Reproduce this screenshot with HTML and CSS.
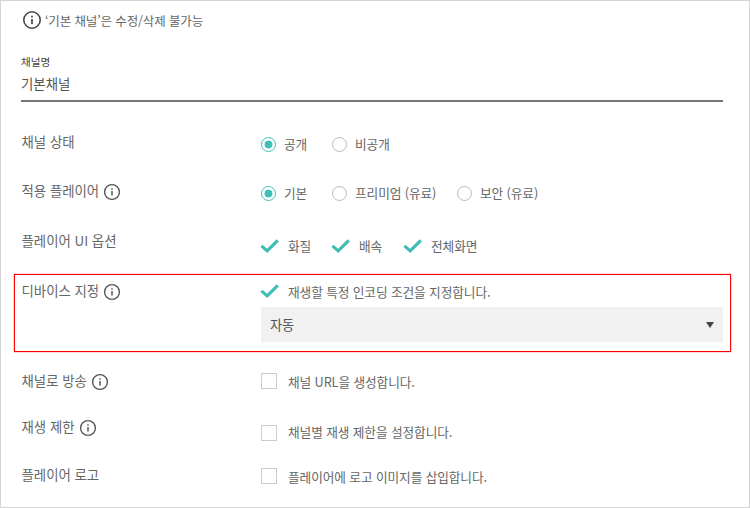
FILE: index.html
```html
<!DOCTYPE html>
<html lang="ko">
<head>
<meta charset="utf-8">
<title>채널 설정</title>
<link rel="stylesheet" href="styles.css">
</head>
<body>
<svg class="defs" width="0" height="0">
  <symbol id="info" viewBox="0 0 18 18"><circle cx="9" cy="9" r="7.4" fill="none" stroke="currentColor" stroke-width="1.4"/><path d="M9 8v4.6M9 5.2v1.5" fill="none" stroke="currentColor" stroke-width="1.5"/></symbol>
  <symbol id="check" viewBox="0 0 20 14"><path d="M1.4 6.8L7.2 11.8L17.8 1.4" fill="none" stroke="currentColor" stroke-width="3.1"/></symbol>
</svg>
<main class="panel">
  <p class="notice"><svg class="info info-lg"><use href="#info"/></svg><span>‘기본 채널’은 수정/삭제 불가능</span></p>
  <div class="field">
    <div class="caption">채널명</div>
    <div class="value">기본채널</div>
  </div>

  <section class="row row-status">
    <div class="label"><span>채널 상태</span></div>
    <div class="options radios">
      <label class="radio"><i class="dot on"></i><span>공개</span></label>
      <label class="radio"><i class="dot"></i><span>비공개</span></label>
    </div>
  </section>

  <section class="row row-player">
    <div class="label"><span>적용 플레이어</span><svg class="info"><use href="#info"/></svg></div>
    <div class="options radios">
      <label class="radio"><i class="dot on"></i><span>기본</span></label>
      <label class="radio"><i class="dot"></i><span>프리미엄 (유료)</span></label>
      <label class="radio"><i class="dot"></i><span>보안 (유료)</span></label>
    </div>
  </section>

  <section class="row row-ui">
    <div class="label"><span>플레이어 UI 옵션</span></div>
    <div class="options checks">
      <label class="item"><svg class="check"><use href="#check"/></svg><span>화질</span></label>
      <label class="item"><svg class="check"><use href="#check"/></svg><span>배속</span></label>
      <label class="item"><svg class="check"><use href="#check"/></svg><span>전체화면</span></label>
    </div>
  </section>

  <section class="row row-device">
    <div class="label"><span>디바이스 지정</span><svg class="info"><use href="#info"/></svg></div>
    <div class="options">
      <label class="item"><svg class="check"><use href="#check"/></svg><span>재생할 특정 인코딩 조건을 지정합니다.</span></label>
      <div class="select"><span>자동</span><i class="arrow"></i></div>
    </div>
  </section>

  <section class="row row-broadcast">
    <div class="label"><span>채널로 방송</span><svg class="info"><use href="#info"/></svg></div>
    <div class="options"><label class="item"><i class="box"></i><span>채널 URL을 생성합니다.</span></label></div>
  </section>

  <section class="row row-limit">
    <div class="label"><span>재생 제한</span><svg class="info"><use href="#info"/></svg></div>
    <div class="options"><label class="item"><i class="box"></i><span>채널별 재생 제한을 설정합니다.</span></label></div>
  </section>

  <section class="row row-logo">
    <div class="label"><span>플레이어 로고</span></div>
    <div class="options"><label class="item"><i class="box"></i><span>플레이어에 로고 이미지를 삽입합니다.</span></label></div>
  </section>
</main>
</body>
</html>
```
FILE: styles.css
```css
* { box-sizing: border-box; }
body { margin: 0; background: #fff; color: #666; font-family: "Noto Sans CJK KR", sans-serif; font-weight: 400; }
.defs { display: block; }
.panel { height: 508px; border: 1px solid #d5d5d5; padding: 7px 18px 0 13px; }
.notice { display: flex; align-items: center; height: 24px; margin: 0 0 0 8px; gap: 3px; font-size: 12.5px; line-height: 20px; letter-spacing: -0.13px; }
.notice span { padding-top: 2px; }
.info { width: 18px; height: 18px; flex: none; color: #555; }
.info-lg { width: 20px; height: 20px; color: #444; }
.field { margin: 20px 8px 29px 7px; height: 50px; border-bottom: 2px solid #777; }
.caption { padding-top: 1px; font-size: 10.6px; line-height: 18px; color: #444; }
.value { font-size: 13.4px; line-height: 24px; color: #555; }

.row { display: flex; align-items: flex-start; padding: 0 8px 0 7.5px; }
.label { display: flex; align-items: center; width: 239.5px; flex: none; height: 20px; gap: 4px; font-size: 13.4px; line-height: 20px; white-space: nowrap; }
.label .info { margin-top: 4px; }
.options { flex: 1; font-size: 12.7px; line-height: 20px; letter-spacing: -0.1px; white-space: nowrap; }
.radios { display: grid; grid-template-columns: 71px 125px auto; }
.checks { display: grid; grid-template-columns: 71px 72px auto; }
.radio, .item { display: flex; align-items: center; height: 20px; }
.radio { gap: 8px; }

.dot { width: 15px; height: 15px; border: 1px solid #bbb; border-radius: 50%; }
.dot.on { border-color: #3fbfb7; background: radial-gradient(circle, #3fbfb7 0 3.6px, transparent 4.3px); }
.check { width: 20px; height: 14px; margin: 0 8px 0 -1px; color: #3fbdb5; }
.box { width: 16px; height: 16px; margin-right: 11px; border: 1px solid #ccc; }

.row-status { height: 49px; }
.row-player { height: 50px; }
.row-ui { height: 44px; }
.row-device { width: 717px; height: 78px; padding: 5px 7px 0 6.5px; border: 1px solid #f00; box-shadow: 0 0 0 0.5px #ffb0b0; }
.row-broadcast { height: 46px; margin-top: 18px; }
.row-limit { height: 48px; }
.row-status .options, .row-player .options { padding-top: 3px; }
.row-ui .options { padding-top: 6px; }
.row-device .options, .row-broadcast .options { padding-top: 1px; }
.row-device .item span { padding-top: 1px; }
.row-limit .options { padding-top: 7px; }
.row-limit .item span { margin-top: -3px; }
.row-broadcast .item span, .row-logo .item span { padding-top: 1px; }
.row-logo .options { padding-top: 2px; }

.select { display: flex; align-items: center; justify-content: space-between; width: 462px; height: 35px; margin-top: 6px; padding: 0 9px; background: #f1f1f1; font-size: 13.2px; color: #555; }
.arrow { border: 4px solid transparent; border-top: 6px solid #444; border-bottom: 0; }
```
